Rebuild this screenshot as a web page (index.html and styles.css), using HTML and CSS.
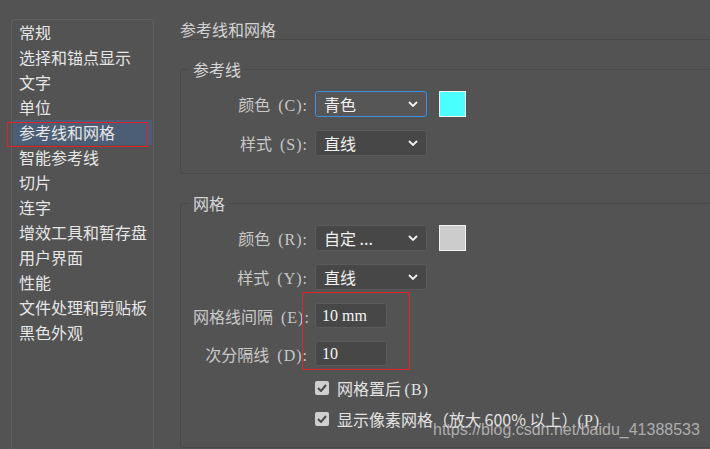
FILE: index.html
```html
<!DOCTYPE html>
<html lang="zh-CN">
<head>
<meta charset="utf-8">
<title>参考线和网格</title>
<link rel="stylesheet" href="styles.css">
</head>
<body>
<div class="app">
  <nav class="sidebar">
    <div class="item">常规</div>
    <div class="item">选择和锚点显示</div>
    <div class="item">文字</div>
    <div class="item">单位</div>
    <div class="item selected">参考线和网格</div>
    <div class="item">智能参考线</div>
    <div class="item">切片</div>
    <div class="item">连字</div>
    <div class="item">增效工具和暂存盘</div>
    <div class="item">用户界面</div>
    <div class="item">性能</div>
    <div class="item">文件处理和剪贴板</div>
    <div class="item">黑色外观</div>
  </nav>
  <main class="content">
    <h1 class="title">参考线和网格</h1>
    <fieldset class="group">
      <legend>参考线</legend>
      <div class="rows">
        <div class="row">
          <label class="label">颜色<span class="key">(C):</span></label>
          <div class="select focus"><span>青色</span><svg class="chev" width="10" height="6" viewBox="0 0 10 6"><polyline points="1,1 5,5 9,1"/></svg></div>
          <div class="swatch cyan"></div>
        </div>
        <div class="row">
          <label class="label">样式<span class="key">(S):</span></label>
          <div class="select"><span>直线</span><svg class="chev" width="10" height="6" viewBox="0 0 10 6"><polyline points="1,1 5,5 9,1"/></svg></div>
        </div>
      </div>
    </fieldset>
    <fieldset class="group last">
      <legend>网格</legend>
      <div class="rows">
        <div class="row">
          <label class="label">颜色<span class="key">(R):</span></label>
          <div class="select"><span>自定 ...</span><svg class="chev" width="10" height="6" viewBox="0 0 10 6"><polyline points="1,1 5,5 9,1"/></svg></div>
          <div class="swatch grey"></div>
        </div>
        <div class="row">
          <label class="label">样式<span class="key">(Y):</span></label>
          <div class="select"><span>直线</span><svg class="chev" width="10" height="6" viewBox="0 0 10 6"><polyline points="1,1 5,5 9,1"/></svg></div>
        </div>
        <div class="row short">
          <label class="label">网格线间隔<span class="key">(E):</span></label>
          <div class="input">10 mm</div>
        </div>
        <div class="row short">
          <label class="label">次分隔线<span class="key">(D):</span></label>
          <div class="input">10</div>
        </div>
        <div class="row check">
          <span class="box"><svg width="10" height="8" viewBox="0 0 10 8"><polyline points="1,4 4,7 9,1"/></svg></span>
          <span class="ctext">网格置后 <span class="ckey">(B)</span></span>
        </div>
        <div class="row check">
          <span class="box"><svg width="10" height="8" viewBox="0 0 10 8"><polyline points="1,4 4,7 9,1"/></svg></span>
          <span class="ctext">显示像素网格（放大 600% 以上）<span class="ckey">(P)</span></span>
        </div>
      </div>
    </fieldset>
  </main>
</div>
<div class="annot annot-nav"></div>
<div class="annot annot-inputs"></div>
<div class="watermark">https://blog.csdn.net/baidu_41388533</div>
</body>
</html>
```
FILE: styles.css
```css
html, body {
  margin: 0;
  padding: 0;
}
body {
  background: #535353;
  width: 710px;
  height: 449px;
  overflow: hidden;
  position: relative;
  font-family: "Noto Sans CJK SC", "Noto Sans", sans-serif;
  font-size: 16px;
  color: #e4e4e4;
}
.app {
  display: flex;
  height: 449px;
}
.sidebar {
  box-sizing: border-box;
  width: 143px;
  margin: 19px 0 0 11px;
  border: 1px solid #5f5f5f;
  border-bottom: none;
  border-radius: 4px 4px 0 0;
  flex: none;
}
.item {
  height: 25px;
  line-height: 25px;
  margin: 0 1px;
  padding-left: 6px;
  color: #e6e6e6;
  white-space: nowrap;
}
.item.selected {
  background: #4b5e75;
}
.content {
  flex: none;
  width: 545px;
  margin-left: 26px;
  padding-top: 19px;
}
.title {
  margin: 0;
  font-size: 16px;
  font-weight: normal;
  line-height: 20px;
  color: #d2d2d2;
  border-bottom: 1px solid #4a4a4a;
}
.group {
  margin: 19px 0 0 0;
  padding: 0 0 17px 12px;
  border: 1px solid #494949;
  border-radius: 3px;
  min-width: 0;
}
.group.last {
  padding-bottom: 19px;
}
.group legend {
  margin-left: -4px;
  padding: 0 4px;
  line-height: 20px;
  color: #d6d6d6;
}
.rows {
  display: flex;
  flex-direction: column;
  gap: 13px;
  margin-top: 12px;
}
.row {
  display: flex;
  align-items: center;
  height: 26px;
}
.row.short {
  height: 25px;
}
.row.check {
  height: 18px;
  padding-left: 122px;
}
.label {
  width: 115px;
  margin-right: 7px;
  text-align: right;
  color: #c8c8c8;
  white-space: nowrap;
}
.key {
  margin-left: 8px;
  font-family: "Liberation Serif", serif;
  letter-spacing: 1px;
}
.select {
  box-sizing: border-box;
  width: 112px;
  height: 26px;
  display: flex;
  align-items: center;
  justify-content: space-between;
  padding: 0 8px 0 8px;
  background: #474747;
  border: 1px solid #5a5a5a;
  border-radius: 3px;
  color: #f0f0f0;
}
.select.focus {
  background: #565656;
  border-color: #3d8ee4;
}
.chev {
  fill: none;
  stroke: #f2f2f2;
  stroke-width: 1.8;
}
.swatch {
  box-sizing: border-box;
  width: 27px;
  height: 26px;
  margin-left: 12px;
  border: 1px solid #f2f2f2;
}
.swatch.cyan {
  background: #4cffff;
}
.swatch.grey {
  background: #cccccc;
}
.input {
  box-sizing: border-box;
  width: 72px;
  height: 25px;
  line-height: 23px;
  padding-left: 6px;
  background: #474747;
  border: 1px solid #5a5a5a;
  border-radius: 3px;
  color: #f4f4f4;
  font-family: "Liberation Serif", "Noto Sans CJK SC", serif;
  font-size: 16px;
}
.box {
  box-sizing: border-box;
  width: 14px;
  height: 14px;
  border-radius: 2px;
  background: #cfcfcf;
  display: flex;
  align-items: center;
  justify-content: center;
}
.box svg {
  fill: none;
  stroke: #4a4a4a;
  stroke-width: 2;
}
.ctext {
  margin-left: 8px;
  color: #e2e2e2;
  white-space: nowrap;
}
.ckey {
  font-family: "Liberation Serif", serif;
  letter-spacing: 1px;
}
.annot {
  position: absolute;
  box-sizing: border-box;
  border: 1px solid #e0232c;
}
.annot-nav {
  left: 7px;
  top: 122px;
  width: 141px;
  height: 25px;
}
.annot-inputs {
  left: 302px;
  top: 292px;
  width: 108px;
  height: 78px;
}
.watermark {
  position: absolute;
  left: 433px;
  top: 421px;
  font-family: "Liberation Sans", Arial, sans-serif;
  font-size: 16px;
  line-height: 18px;
  color: rgba(235, 235, 235, 0.6);
  white-space: nowrap;
}
```
